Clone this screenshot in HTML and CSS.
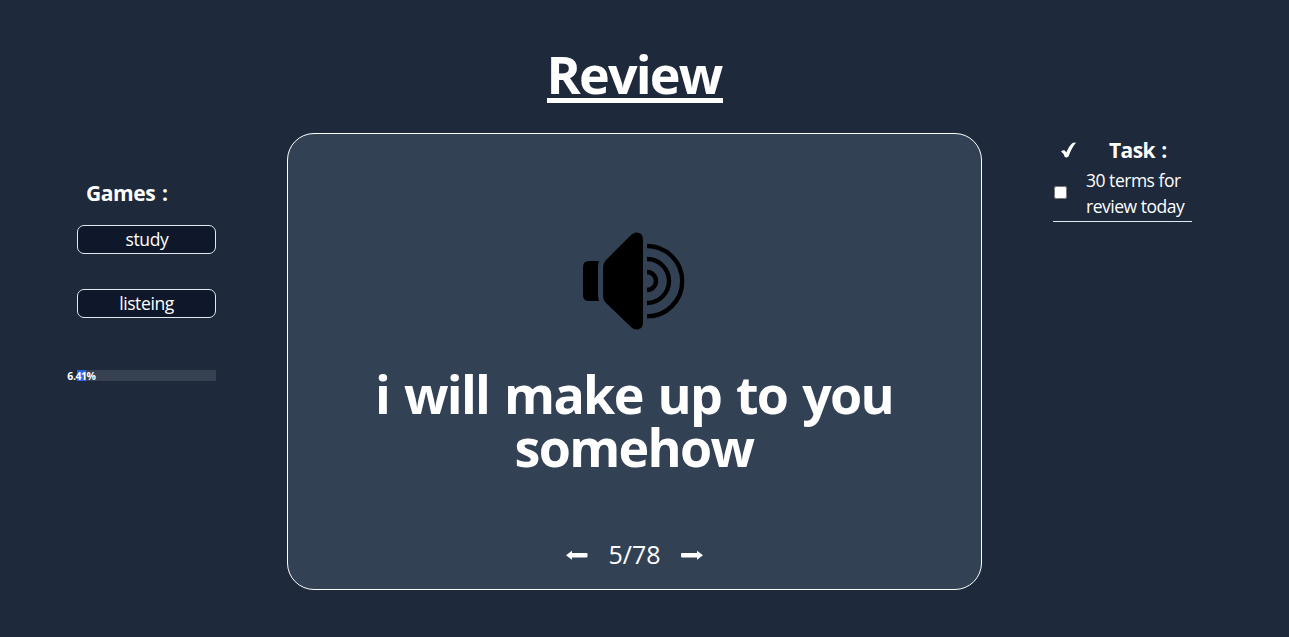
FILE: index.html
```html
<!DOCTYPE html>
<html lang="en">
<head>
<meta charset="utf-8">
<title>Review</title>
<link rel="stylesheet" href="styles.css">
</head>
<body>
<h1 class="title"><span class="title-text">Review</span></h1>
<main class="layout">
  <aside class="games">
    <h2 class="games-title">Games :</h2>
    <button class="game game-study">study</button>
    <button class="game game-listen">listeing</button>
    <div class="progress"><div class="progress-fill" style="width:6.41%"><span class="progress-label">6.41%</span></div></div>
  </aside>
  <section class="card">
    <svg class="speaker" viewBox="0 0 104 98" width="104" height="98">
      <path d="M17 29H7Q1 29 1 35V63Q1 69 7 69H17Q16 66 16 62V36Q16 32 17 29Z"/>
      <path d="M21 35Q21 31 24 28L48 4Q53-1 57 1Q61 2 61 8V90Q61 96 57 97Q53 99 48 94L24 71Q21 68 21 64Z"/>
      <g fill="none" stroke="#000" stroke-width="4.4">
        <path d="M65 40A9 9 0 0 1 65 58"/>
        <path d="M65 27A22 22 0 0 1 65 71"/>
        <path d="M65 14A35.2 35.2 0 0 1 65 84.4"/>
      </g>
    </svg>
    <p class="phrase"><span class="line line-first">i will make up to you</span><span class="line line-second">somehow</span></p>
    <nav class="pager">
      <svg class="arrow" viewBox="0 0 22 10" width="22" height="10"><path d="M0 5.3L6 .8V3H20.5Q21.5 3 21.5 4V6.6Q21.5 7.6 20.5 7.6H6V9.8Z"/></svg>
      <span class="count">5/78</span>
      <svg class="arrow" viewBox="0 0 22 10" width="22" height="10"><path d="M22 5.3L16 .8V3H1Q0 3 0 4V6.6Q0 7.6 1 7.6H16V9.8Z"/></svg>
    </nav>
  </section>
  <aside class="tasks">
    <div class="tasks-head">
      <svg class="tick" viewBox="0 0 15 16" width="15" height="16"><path d="M0 9.5Q2 7.5 3.8 8.5L5.3 10.5Q8 4 11.5 1Q13.3.2 15 .8Q10.5 6 7.5 14.5Q5.5 16 3.8 15Q2.5 11 0 9.5Z"/></svg>
      <h2 class="tasks-title">Task :</h2>
    </div>
    <label class="task"><input class="check" type="checkbox"><span class="task-text"><span class="task-line task-top">30 terms for</span><span class="task-line task-bottom">review today</span></span></label>
  </aside>
</main>
</body>
</html>
```
FILE: styles.css
```css
* { box-sizing: border-box; }
body {
  margin: 0;
  padding: 47px 97px 0 77px;
  height: 637px;
  overflow: hidden;
  background: #1e293b;
  color: #fff;
  font-family: "Open Sans", "Noto Sans", sans-serif;
}
h1, h2, p { margin: 0; }
.title {
  display: flex;
  justify-content: center;
  height: 86px;
  font-size: 52px;
  line-height: 53px;
}
.title-text {
  height: 56px;
  width: 176px;
  border-bottom: 5px solid #fff;
  letter-spacing: -1.8px;
  white-space: nowrap;
}
.layout {
  display: grid;
  grid-template-columns: 139px 695px 139px;
  column-gap: 71px;
}
.games { padding-top: 46px; }
.games-title {
  padding-left: 9px;
  height: 46px;
  font-size: 21px;
  line-height: 28px;
  letter-spacing: -.4px;
  word-spacing: 1.5px;
  white-space: nowrap;
}
.game {
  display: block;
  width: 139px;
  height: 29px;
  margin: 0 0 35px;
  padding: 0 0 1px;
  border: 1px solid #e2e8f0;
  border-radius: 7px;
  background: #0f172a;
  color: #fff;
  font: 17.5px/26px "Open Sans", sans-serif;
  letter-spacing: -.4px;
}
.game-study { padding-left: 1px; }
.progress {
  height: 11px;
  margin-top: 52px;
  background: #374151;
}
.progress-fill {
  display: flex;
  justify-content: center;
  height: 11px;
  background: #2563eb;
}
.progress-label {
  flex: none;
  font-size: 10.5px;
  font-weight: 700;
  line-height: 12px;
  letter-spacing: -.45px;
}
.card {
  display: flex;
  flex-direction: column;
  align-items: center;
  height: 457px;
  padding-top: 98px;
  border: 1px solid #fff;
  border-radius: 27px;
  background: #334155;
}
.speaker { margin-right: 2px; }
.phrase {
  margin-top: 37px;
  font-size: 52px;
  font-weight: 700;
  line-height: 53px;
  letter-spacing: -1.7px;
  word-spacing: 3px;
  text-align: center;
}
.line { display: block; padding-right: 1px; white-space: nowrap; }
.pager {
  display: flex;
  align-items: center;
  gap: 20px;
  height: 36px;
  margin-top: 64px;
}
.arrow, .tick { fill: #fff; }
.count { font-size: 25px; line-height: 34px; height: 36px; }
.tasks { padding-top: 3px; }
.tasks-head {
  display: flex;
  align-items: center;
  height: 28px;
  padding-left: 8px;
  gap: 33px;
}
.tasks-title {
  font-size: 21px;
  line-height: 28px;
  letter-spacing: -.6px;
  word-spacing: 1.5px;
  white-space: nowrap;
}
.task {
  display: flex;
  align-items: center;
  height: 58px;
  padding: 0 0 0 1px;
  border-bottom: 1px solid #e2e8f0;
}
.check { width: 13px; height: 13px; margin: 0 19px 0 0; }
.task-text { font-size: 17.5px; line-height: 26px; letter-spacing: -.48px; }
.task-line { display: block; white-space: nowrap; }
```
